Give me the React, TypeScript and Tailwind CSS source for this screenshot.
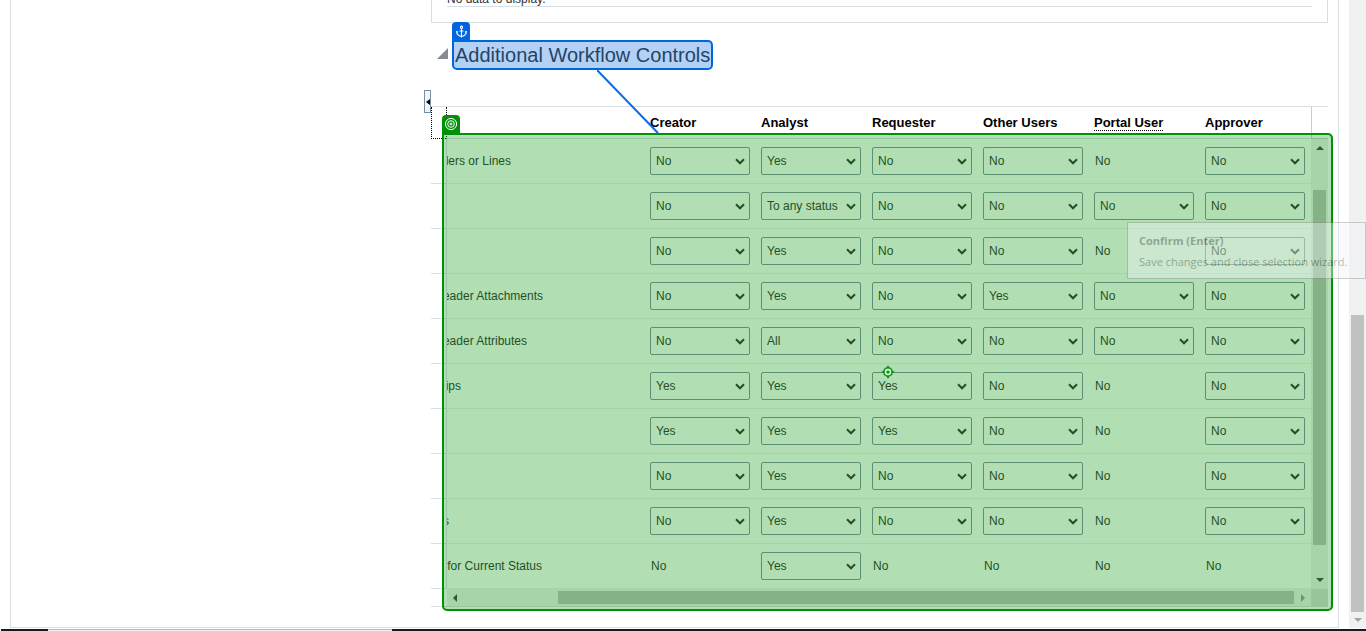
import { Anchor } from "lucide-react";

type Cell = { value: string; fixed?: boolean };
type Row = { label: string; visible: number; cells: Cell[] };

const columns = ["Creator", "Analyst", "Requester", "Other Users", "Portal User", "Approver"];

const pick = (value: string): Cell => ({ value });
const fixed = (value: string): Cell => ({ value, fixed: true });

const rows: Row[] = [
  { label: "ders or Lines", visible: 64, cells: [pick("No"), pick("Yes"), pick("No"), pick("No"), fixed("No"), pick("No")] },
  { label: "", visible: 0, cells: [pick("No"), pick("To any status"), pick("No"), pick("No"), pick("No"), pick("No")] },
  { label: "", visible: 0, cells: [pick("No"), pick("Yes"), pick("No"), pick("No"), fixed("No"), pick("No")] },
  { label: "eader Attachments", visible: 96, cells: [pick("No"), pick("Yes"), pick("No"), pick("Yes"), pick("No"), pick("No")] },
  { label: "eader Attributes", visible: 80, cells: [pick("No"), pick("All"), pick("No"), pick("No"), pick("No"), pick("No")] },
  { label: "ips", visible: 14, cells: [pick("Yes"), pick("Yes"), pick("Yes"), pick("No"), fixed("No"), pick("No")] },
  { label: "", visible: 0, cells: [pick("Yes"), pick("Yes"), pick("Yes"), pick("No"), fixed("No"), pick("No")] },
  { label: "", visible: 0, cells: [pick("No"), pick("Yes"), pick("No"), pick("No"), fixed("No"), pick("No")] },
  { label: "s", visible: 2, cells: [pick("No"), pick("Yes"), pick("No"), pick("No"), fixed("No"), pick("No")] },
  { label: "for Current Status", visible: 95, cells: [fixed("No"), pick("Yes"), fixed("No"), fixed("No"), fixed("No"), fixed("No")] },
];

function Triangle({ points, className }: { points: string; className: string }) {
  return (
    <svg viewBox="0 0 8 8" className={`size-2 shrink-0 fill-current ${className}`} aria-hidden="true">
      <polygon points={points} />
    </svg>
  );
}

const UP = "0,6 4,2 8,6";
const DOWN = "0,2 4,6 8,2";
const LEFT = "6,0 2,4 6,8";
const RIGHT = "2,0 6,4 2,8";

function ControlsTable() {
  return (
    <table className="w-full table-fixed border-separate border-spacing-0 text-xs text-[#333]">
      <colgroup>
        <col className="w-[15px]" />
        <col />
        {columns.map((c) => (
          <col key={c} className="w-[111px]" />
        ))}
      </colgroup>
      <thead>
        <tr className="h-8 text-[13px] text-black">
          <td className="border-b border-l border-dotted border-black p-0" />
          <td className="border-b border-l border-b-[#d6dfe6] border-l-black p-0 [border-left-style:dotted]" />
          {columns.map((c) => (
            <th key={c} scope="col" className="border-b border-[#d6dfe6] p-0 pl-[5px] text-left leading-4 font-bold">
              <span className={c === "Portal User" ? "border-b border-dotted border-black" : ""}>{c}</span>
            </th>
          ))}
        </tr>
      </thead>
      <tbody>
        {rows.map((row, r) => (
          <tr key={r} className="h-[45px]">
            <td className="border-b border-[#d6dfe6] p-0" />
            <td className="border-b border-l border-b-[#eceff1] border-l-[#d6dfe6] p-0">
              <span className="flex justify-end overflow-hidden whitespace-nowrap" style={{ width: row.visible }}>
                {row.label}
              </span>
            </td>
            {row.cells.map((cell, c) => (
              <td key={c} className="border-b border-[#eceff1] p-0 pl-[5px]">
                {cell.fixed ? (
                  <span className="pl-px">{cell.value}</span>
                ) : (
                  <div className="relative w-[100px]">
                    <select
                      aria-label={`${columns[c]} ${row.label}`}
                      defaultValue={cell.value}
                      className="block h-7 w-full appearance-none rounded-[2px] border border-[#8390a1] bg-white px-[5px] text-xs"
                    >
                      {Array.from(new Set([cell.value, "Yes", "No"])).map((o) => (
                        <option key={o}>{o}</option>
                      ))}
                    </select>
                    <svg
                      viewBox="0 0 10 7"
                      className="pointer-events-none absolute top-[11px] right-[5px] h-[7px] w-[10px] fill-none stroke-[#333]"
                      strokeWidth="2"
                      aria-hidden="true"
                    >
                      <path d="M1 1.3l4 4 4-4" />
                    </svg>
                  </div>
                )}
              </td>
            ))}
          </tr>
        ))}
      </tbody>
    </table>
  );
}

export default function App() {
  return (
    <div className="relative flex min-h-screen flex-col overflow-hidden bg-white font-['Liberation_Sans',Arial,sans-serif] text-[#333]">
      <div className="flex flex-1">
        <main className="mr-[10px] ml-[10px] flex flex-1 border-x border-b border-[#d6dfe6]">
          <div className="w-[413px] shrink-0" />
          <div className="w-[7px] shrink-0 pt-[90px]">
            <button
              type="button"
              aria-label="Collapse pane"
              className="flex h-[23px] w-[7px] items-center justify-center border border-[#758fa5] bg-[#f3f6fa] text-black"
            >
              <Triangle points="6,1 2,4 6,7" className="" />
            </button>
          </div>

          <div className="mr-[10px] min-w-0 flex-1 pb-5">
            <section className="h-[23px] border-x border-b border-[#d6dfe6] px-[15px]">
              <div className="flex h-[7px] items-end border-b border-[#d6dfe6] text-xs leading-[14px]">No data to display.</div>
            </section>

            <div className="relative flex h-[83px] items-start pt-[17px] pl-[6px]">
              <svg viewBox="0 0 11 11" className="mt-2 size-[11px] fill-[#858b90]" aria-hidden="true">
                <polygon points="11,0 11,11 0,11" />
              </svg>
              <div className="relative ml-1">
                <h2 className="px-[3px] text-xl leading-[30px] whitespace-nowrap text-[#333]">Additional Workflow Controls</h2>
                <div className="pointer-events-none absolute inset-0 rounded-[5px] rounded-tl-none border-2 border-[#0066de] bg-[#0066de]/30" />
                <span className="absolute bottom-full left-0 flex size-[18px] items-center justify-center rounded-t-[4px] bg-[#0066de] text-white">
                  <Anchor size={13} strokeWidth={2} />
                </span>
              </div>
              <svg viewBox="0 0 62 64" className="absolute top-[47px] left-[166px] z-20 h-16 w-[62px]" aria-hidden="true">
                <line x1="0" y1="0" x2="61" y2="63" stroke="#0b6be0" strokeWidth="2" />
              </svg>
            </div>

            <section className="relative border-t border-[#d6dfe6]">
              <div className="flex">
                <div className="min-w-0 flex-1">
                  <ControlsTable />
                </div>
                <div className="flex w-[17px] shrink-0 flex-col">
                  <div className="h-8 border-b border-l border-[#c8ccd0]" />
                  <div className="flex flex-1 flex-col items-center bg-[#f1f1f1] py-[5px] text-[#444]">
                    <Triangle points={UP} className="" />
                    <div className="mt-[38px] mb-[31px] w-[13px] flex-1 bg-[#c1c1c1]" />
                    <Triangle points={DOWN} className="" />
                  </div>
                </div>
              </div>
              <div className="flex h-[18px] border-b border-[#d6dfe6]">
                <div className="ml-4 flex flex-1 items-center bg-[#f1f1f1] pl-1 text-[#444]">
                  <Triangle points={LEFT} className="" />
                  <div className="ml-[99px] h-[13px] flex-1 bg-[#c1c1c1]" />
                  <Triangle points={RIGHT} className="mr-1 ml-[5px] text-[#999]" />
                </div>
                <div className="w-[17px] bg-[#dcdcdc]" />
              </div>

              <div className="pointer-events-none absolute top-[26px] -right-[5px] -bottom-1 left-[11px] z-10 rounded-[5px] rounded-tl-none border-2 border-[#019108] bg-[#019108]/30">
                <span className="absolute -top-5 -left-0.5 flex size-[18px] items-center justify-center rounded-t-[4px] bg-[#019108] text-white">
                  <svg viewBox="0 0 14 14" className="size-[14px] fill-none stroke-white" aria-hidden="true">
                    <circle cx="7" cy="7" r="5.6" />
                    <circle cx="7" cy="7" r="3.3" />
                    <circle cx="7" cy="7" r="1" />
                  </svg>
                </span>
                <svg
                  viewBox="0 0 14 14"
                  className="absolute top-1/2 left-1/2 size-[13px] -translate-x-1/2 -translate-y-1/2"
                  aria-hidden="true"
                >
                  <circle cx="7" cy="7" r="4.5" fill="#cfeccf" stroke="#019108" strokeWidth="1.6" />
                  <circle cx="7" cy="7" r="1.7" fill="#019108" />
                  <path d="M7 0v3M7 11v3M0 7h3M11 7h3" stroke="#019108" strokeWidth="1.8" />
                </svg>
              </div>
            </section>
          </div>
        </main>

        <div className="flex w-[17px] shrink-0 flex-col items-center bg-[#f1f1f1] pb-1 text-[#a3a3a3]">
          <div className="mt-[315px] mb-1 w-[13px] flex-1 bg-[#c1c1c1]" />
          <Triangle points={DOWN} className="" />
        </div>
      </div>

      <footer className="mt-px ml-px flex h-0.5 bg-[#1b1b1d]">
        <div className="ml-[47px] w-[344px] border-t border-[#b8b8b8] bg-[#f1f1f1]" />
      </footer>

      <div
        role="tooltip"
        className="absolute top-[222px] right-0 z-30 h-[57px] w-[239px] border border-[#8a8a8a] bg-[#f3f5f9] pt-[7px] pl-[11px] font-['Open_Sans','Noto_Sans',sans-serif] text-[11px] whitespace-nowrap text-[#555] opacity-40"
      >
        <p className="leading-[22px] font-bold">Confirm (Enter)</p>
        <p className="leading-5">Save changes and close selection wizard.</p>
      </div>
    </div>
  );
}
